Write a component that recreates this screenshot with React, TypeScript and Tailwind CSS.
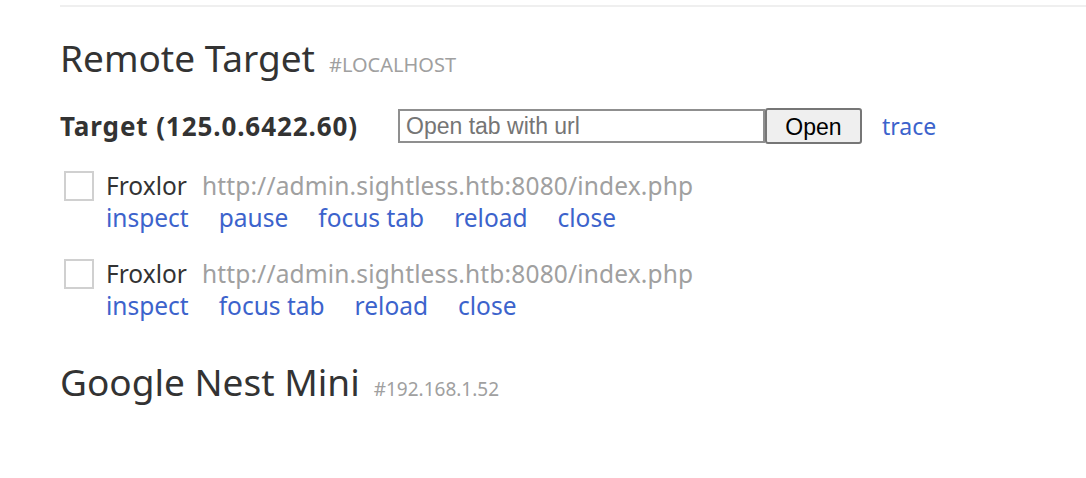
import React from "react";

interface Tab {
  title: string;
  url: string;
  actions: string[];
}

const tabs: Tab[] = [
  {
    title: "Froxlor",
    url: "http://admin.sightless.htb:8080/index.php",
    actions: ["inspect", "pause", "focus tab", "reload", "close"],
  },
  {
    title: "Froxlor",
    url: "http://admin.sightless.htb:8080/index.php",
    actions: ["inspect", "focus tab", "reload", "close"],
  },
];

const TabRow = ({ tab }: { tab: Tab }) => (
  <div className="flex items-start gap-[12px] pl-[4px]">
    <div className="w-[30px] h-[30px] mt-[1px] border-2 border-[#d0d0d0] bg-white shrink-0" />
    <div className="flex flex-col">
      <div className="flex items-baseline gap-[15px] h-[32px] leading-[32px]">
        <span className="text-[24.5px] text-[#333]">{tab.title}</span>
        <span className="text-[24.5px] tracking-[0.15px] text-[#a0a0a0]">{tab.url}</span>
      </div>
      <div className="flex gap-[30px] h-[32px] leading-[32px]">
        {tab.actions.map((a) => (
          <a key={a} className="text-[24.5px] text-[#3c63cc] cursor-pointer">
            {a}
          </a>
        ))}
      </div>
    </div>
  </div>
);

const App = () => {
  return (
    <div
      className="w-[1086px] h-[478px] bg-white overflow-hidden pl-[60px] pt-[5px]"
      style={{ fontFamily: '"Noto Sans", sans-serif' }}
    >
      <div className="border-t-2 border-[#efefef]" />

      <div className="flex items-baseline gap-[14px] mt-[27px] h-[48px] leading-[48px]">
        <h2 className="text-[37px] text-[#333]">Remote Target</h2>
        <span className="text-[20px] text-[#a0a0a0]">#LOCALHOST</span>
      </div>

      <div className="flex items-center mt-[26px] h-[36px]">
        <span className="text-[26px] font-bold tracking-[0.9px] text-[#333] w-[338px]">
          Target (125.0.6422.60)
        </span>
        <input
          className="w-[367px] h-[34px] border-2 border-[#8f8f8f] px-[6px] text-[23px] outline-none placeholder:text-[#757575]"
          style={{ fontFamily: '"Liberation Sans", sans-serif' }}
          placeholder="Open tab with url"
        />
        <button
          className="w-[97px] h-[36px] border-2 border-[#767676] rounded-[3px] bg-[#efefef] text-[23px] text-black"
          style={{ fontFamily: '"Liberation Sans", sans-serif' }}
        >
          Open
        </button>
        <a className="ml-[20px] text-[23px] text-[#3c63cc] cursor-pointer">trace</a>
      </div>

      <div className="mt-[26px] flex flex-col gap-[24px]">
        {tabs.map((t, i) => (
          <TabRow key={i} tab={t} />
        ))}
      </div>

      <div className="flex items-baseline gap-[14px] mt-[36px] h-[48px] leading-[48px]">
        <h2 className="text-[37px] text-[#333]">Google Nest Mini</h2>
        <span className="text-[19px] text-[#a0a0a0]">#192.168.1.52</span>
      </div>
    </div>
  );
};

export default App;
